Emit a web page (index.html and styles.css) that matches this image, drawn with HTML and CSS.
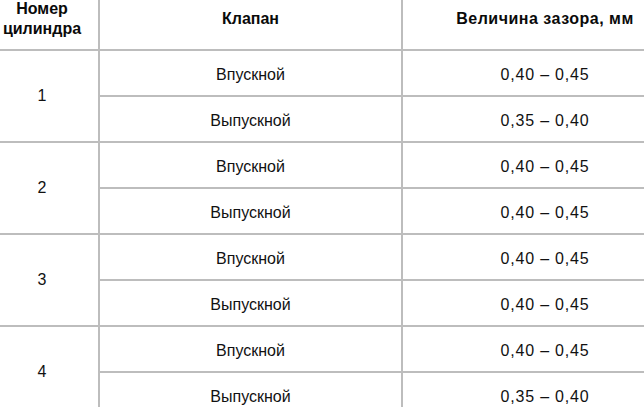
FILE: index.html
```html
<!DOCTYPE html>
<html lang="ru">
<head>
<meta charset="utf-8">
<link rel="stylesheet" href="styles.css">
</head>
<body>
<table class="gaps">
  <colgroup>
    <col class="c-num">
    <col class="c-valve">
    <col class="c-gap">
  </colgroup>
  <thead>
    <tr><th>Номер<br>цилиндра</th><th>Клапан</th><th class="wide">Величина зазора, мм</th></tr>
  </thead>
  <tbody>
    <tr><td rowspan="2" class="num">1</td><td>Впускной</td><td class="val">0,40 – 0,45</td></tr>
    <tr><td>Выпускной</td><td class="val">0,35 – 0,40</td></tr>
    <tr><td rowspan="2" class="num">2</td><td>Впускной</td><td class="val">0,40 – 0,45</td></tr>
    <tr><td>Выпускной</td><td class="val">0,40 – 0,45</td></tr>
    <tr><td rowspan="2" class="num">3</td><td>Впускной</td><td class="val">0,40 – 0,45</td></tr>
    <tr><td>Выпускной</td><td class="val">0,40 – 0,45</td></tr>
    <tr><td rowspan="2" class="num">4</td><td>Впускной</td><td class="val">0,40 – 0,45</td></tr>
    <tr><td>Выпускной</td><td class="val">0,35 – 0,40</td></tr>
  </tbody>
</table>
</body>
</html>
```
FILE: styles.css
```css
html, body {
  margin: 0;
  padding: 0;
  background: #fff;
  overflow: hidden;
}
.gaps {
  border-collapse: collapse;
  table-layout: fixed;
  width: 703px;
  margin: -13px 0 0 -16px;
  font-family: "Liberation Sans", Arial, sans-serif;
  color: #111;
}
.c-num { width: 114px; }
.c-valve { width: 303px; }
.c-gap { width: 286px; }
.gaps th, .gaps td {
  border: 2px solid #bdbdbd;
  text-align: center;
  vertical-align: middle;
  padding: 0;
}
.gaps th {
  height: 60px;
  font-size: 16px;
  font-weight: bold;
  line-height: 20px;
  color: #0a0a0a;
}
.gaps .wide {
  letter-spacing: 0.5px;
}
.gaps td {
  height: 41px;
  padding-top: 3px;
  font-size: 16px;
}
.gaps .num {
  padding-top: 0;
}
.gaps .val {
  letter-spacing: 0.8px;
}
```
